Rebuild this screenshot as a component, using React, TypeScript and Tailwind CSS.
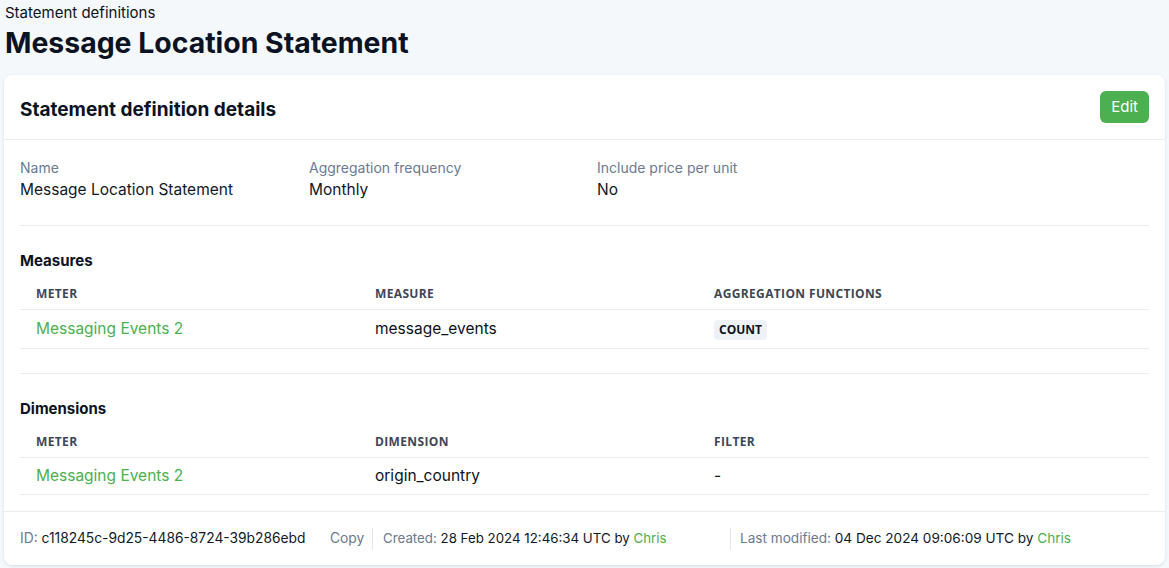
const measures = [
  { meter: "Messaging Events 2", measure: "message_events", fn: "COUNT" },
];

const dimensions = [
  { meter: "Messaging Events 2", dimension: "origin_country", filter: "-" },
];

function Field({ label, value }: { label: string; value: string }) {
  return (
    <div className="flex flex-col gap-[2px]">
      <span className="text-[14px] leading-[18px] text-[#6b7a90]">{label}</span>
      <span className="text-[15.5px] leading-[22px] text-[#111827]">{value}</span>
    </div>
  );
}

function TableHead({ cols }: { cols: string[] }) {
  return (
    <div className="grid grid-cols-[339px_339px_1fr] border-b border-[#e8ecf1] h-[32px] items-center">
      {cols.map((c) => (
        <span
          key={c}
          className="px-4 text-[12px] font-bold tracking-[0.03em] text-[#3d4656] font-['Open_Sans',sans-serif]"
        >
          {c}
        </span>
      ))}
    </div>
  );
}

export default function App() {
  return (
    <div className="min-h-screen bg-[#f5f8fb] px-1 pt-[4px] pb-[3px] font-['Inter',sans-serif] text-[#0b1222]">
      <div className="px-px text-[15px] leading-[18px]">Statement definitions</div>
      <h1 className="px-px mt-[3px] text-[28.4px] font-bold leading-[36px]">Message Location Statement</h1>
      <div className="mt-[14px] rounded-lg bg-white shadow-[0_1px_3px_rgba(15,23,42,0.12)]">
        <div className="flex items-center justify-between border-b border-[#e8ecf1] h-[65px] px-4">
          <h2 className="pt-[6px] text-[19px] font-bold">Statement definition details</h2>
          <button className="rounded-md bg-[#4caf50] px-[11px] h-[32px] text-[15px] text-white">Edit</button>
        </div>
        <div className="px-4">
          <div className="grid grid-cols-[289px_288px_1fr] pt-[19px] pb-[24px] border-b border-[#e8ecf1]">
            <Field label="Name" value="Message Location Statement" />
            <Field label="Aggregation frequency" value="Monthly" />
            <Field label="Include price per unit" value="No" />
          </div>

          <div className="pt-[25px] pb-[24px] border-b border-[#e8ecf1]">
            <h3 className="text-[15px] font-bold leading-[20px]">Measures</h3>
            <div className="mt-[7px]">
              <TableHead cols={["METER", "MEASURE", "AGGREGATION FUNCTIONS"]} />
              {measures.map((m) => (
                <div
                  key={m.meter}
                  className="grid grid-cols-[339px_339px_1fr] border-b border-[#e8ecf1] h-[39px] items-center text-[15.5px]"
                >
                  <span className="px-4 text-[#4caf50]">{m.meter}</span>
                  <span className="px-4">{m.measure}</span>
                  <span className="px-4">
                    <span className="inline-block rounded-sm bg-[#eef2f6] px-[5px] py-[2px] text-[12px] font-bold leading-[16px] font-['Open_Sans',sans-serif]">
                      {m.fn}
                    </span>
                  </span>
                </div>
              ))}
            </div>
          </div>

          <div className="pt-[25px] pb-[16px]">
            <h3 className="text-[15px] font-bold leading-[20px]">Dimensions</h3>
            <div className="mt-[7px]">
              <TableHead cols={["METER", "DIMENSION", "FILTER"]} />
              {dimensions.map((d) => (
                <div
                  key={d.meter}
                  className="grid grid-cols-[339px_339px_1fr] border-b border-[#e8ecf1] h-[37px] items-center text-[15.5px]"
                >
                  <span className="px-4 text-[#4caf50]">{d.meter}</span>
                  <span className="px-4">{d.dimension}</span>
                  <span className="px-4">{d.filter}</span>
                </div>
              ))}
            </div>
          </div>
        </div>
        <div className="flex items-center border-t border-[#e8ecf1] h-[54px] px-4 text-[13.8px] text-[#111827]">
          <span className="w-[310px]">
            <span className="text-[#6b7a90]">ID:</span> c118245c-9d25-4486-8724-39b286ebd
          </span>
          <span className="w-[42px] text-[#6b7a90]">Copy</span>
          <span className="h-[22px] border-l border-[#e1e6ec]" />
          <span className="w-[357px] pl-[10px] text-[13.3px]">
            <span className="text-[#6b7a90]">Created:</span> 28 Feb 2024 12:46:34 UTC by{" "}
            <span className="text-[#4caf50]">Chris</span>
          </span>
          <span className="h-[22px] border-l border-[#e1e6ec]" />
          <span className="pl-[9px] text-[13.6px]">
            <span className="text-[#6b7a90]">Last modified:</span> 04 Dec 2024 09:06:09 UTC by{" "}
            <span className="text-[#4caf50]">Chris</span>
          </span>
        </div>
      </div>
    </div>
  );
}
